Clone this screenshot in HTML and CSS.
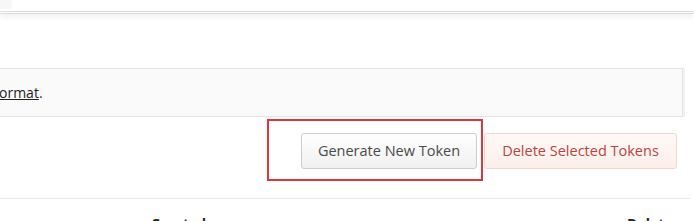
FILE: index.html
```html
<!DOCTYPE html>
<html lang="en">
<head>
    <meta charset="UTF-8">
    <meta name="viewport" content="width=device-width, initial-scale=1.0">
    <title>API Tokens</title>
    <link rel="stylesheet" href="styles.css">
</head>
<body>
    <div class="topbar"><span class="corner"></span></div>

    <div class="content">
        <div class="notice">
            <p><a href="#">ormat</a>.</p>
        </div>

        <div class="actions">
            <div class="highlight">
                <button class="btn btn-generate">Generate New Token</button>
            </div>
            <button class="btn btn-danger">Delete Selected Tokens</button>
        </div>

        <div class="table-head">
            <span class="col-created">Created</span>
            <span class="col-delete">Delete</span>
        </div>
    </div>
</body>
</html>
```

FILE: styles.css
```css
body {
    margin: 0;
    background: #fff;
    color: #333;
    font-family: 'Open Sans', sans-serif;
    font-size: 14px;
    overflow: hidden;
}
.topbar {
    height: 11px;
    border-bottom: 3px double #dcdcdc;
    box-shadow: 0 3px 6px rgba(0, 0, 0, 0.06);
}
.corner {
    display: block;
    width: 12px;
    height: 9px;
    background: #f7f7f7;
}
.content {
    padding-top: 54px;
    padding-right: 11px;
}
.notice {
    background: #fafafa;
    border: 1px solid #e4e4e4;
    border-left: none;
    height: 47px;
    display: flex;
    align-items: center;
    box-shadow: 2px 0 0 #f1f1f1;
}
.notice p {
    margin: 0 0 0 -1px;
}
.notice a {
    color: #222;
}
.actions {
    display: flex;
    justify-content: flex-end;
    align-items: center;
    margin-top: 2px;
    margin-right: 6px;
}
.highlight {
    border: 2px solid #d8383e;
    width: 180px;
    height: 58px;
    padding-left: 32px;
    display: flex;
    align-items: center;
}
.btn {
    font-family: 'Open Sans', sans-serif;
    font-size: 14.5px;
    color: #4a4a4a;
    background: linear-gradient(to bottom, #ffffff, #f0f0f0);
    border: 1px solid #cdcdcd;
    border-radius: 3px;
    height: 36px;
    padding: 0;
    margin-top: 1px;
    cursor: pointer;
}
.btn-generate {
    width: 176px;
}
.btn-danger {
    color: #b5463f;
    background: linear-gradient(to bottom, #fff8f6, #fcefea);
    border-color: #f1d8ce;
    margin-left: 1px;
    width: 193px;
}
.table-head {
    margin-top: 17px;
    margin-right: -7px;
    border-top: 1px solid #ebebeb;
    height: 30px;
    position: relative;
    font-weight: bold;
    color: #222;
}
.col-created {
    position: absolute;
    left: 151px;
    top: 15px;
}
.col-delete {
    position: absolute;
    left: 627px;
    top: 15px;
}
```
